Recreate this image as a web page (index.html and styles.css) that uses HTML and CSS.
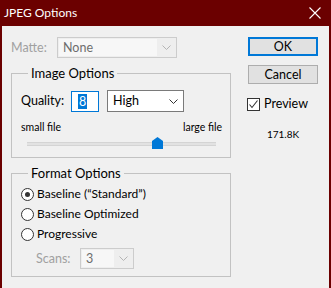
FILE: index.html
```html
<!DOCTYPE html>
<html>
<head>
<meta charset="utf-8">
<title>JPEG Options</title>
<link rel="stylesheet" href="styles.css">
</head>
<body>
<div class="window">
    <div class="titlebar">
        <span class="title">JPEG Options</span>
        <svg class="close" width="12" height="12" viewBox="0 0 12 12"><path d="M0.5 0.5L11.5 11.5M11.5 0.5L0.5 11.5" stroke="#fff" stroke-width="1.1" fill="none"/></svg>
    </div>
    <div class="content">
        <div class="left">
            <div class="row matte">
                <span class="lbl off">Matte:</span>
                <div class="select off wide">
                    <span class="field">None</span>
                    <span class="arrow"><svg width="9" height="5" viewBox="0 0 9 5"><path d="M0.5 0.5L4.5 4.5L8.5 0.5" stroke="#b4b4b4" fill="none"/></svg></span>
                </div>
            </div>

            <fieldset class="group img">
                <legend>Image Options</legend>
                <div class="row quality">
                    <span class="lbl">Quality:</span>
                    <div class="numbox"><span class="sel">8</span></div>
                    <div class="select high">
                        <span class="field">High</span>
                        <span class="arrow"><svg width="9" height="5" viewBox="0 0 9 5"><path d="M0.5 0.5L4.5 4.5L8.5 0.5" stroke="#333" fill="none"/></svg></span>
                    </div>
                </div>
                <div class="ends"><span>small file</span><span>large file</span></div>
                <div class="slider">
                    <div class="track"></div>
                    <svg class="thumb" width="11" height="12" viewBox="0 0 11 12"><path d="M0 4L5.5 0L11 4V12H0Z" fill="#0078d7"/></svg>
                </div>
            </fieldset>

            <fieldset class="group fmt">
                <legend>Format Options</legend>
                <div class="radio"><span class="dot on"></span>Baseline (“Standard”)</div>
                <div class="radio"><span class="dot"></span>Baseline Optimized</div>
                <div class="radio"><span class="dot"></span>Progressive</div>
                <div class="row scans">
                    <span class="lbl off">Scans:</span>
                    <div class="select off small">
                        <span class="field">3</span>
                        <span class="arrow"><svg width="9" height="5" viewBox="0 0 9 5"><path d="M0.5 0.5L4.5 4.5L8.5 0.5" stroke="#b4b4b4" fill="none"/></svg></span>
                    </div>
                </div>
            </fieldset>
        </div>

        <div class="right">
            <div class="btn default">OK</div>
            <div class="btn">Cancel</div>
            <div class="check">
                <span class="box"><svg width="11" height="11" viewBox="0 0 11 11"><path d="M1.5 5.5L4 8.5L9.5 1.5" stroke="#333" stroke-width="1.1" fill="none"/></svg></span>
                Preview
            </div>
            <div class="size">171.8K</div>
        </div>
    </div>
</div>
</body>
</html>
```

FILE: styles.css
```css
html,body{margin:0;padding:0;}
body{background:#f0f0f0;font:12.5px/16px "Segoe UI",Lato,"Noto Sans",Arial,sans-serif;color:#000;}
.window{width:331px;height:288px;background:#6b0000;box-sizing:border-box;padding:0 2px;overflow:hidden;}
.titlebar{height:26px;display:flex;align-items:center;justify-content:space-between;color:#fff;padding:0 10px 0 2px;margin:0 -2px 0 0;}
.title{font-size:12px;}
.close{display:block;}
.content{background:#f0f0f0;height:262px;display:flex;padding:11px 0 0 9px;box-sizing:border-box;}
.left{width:220px;}
.right{width:70px;margin-left:17px;display:flex;flex-direction:column;align-items:stretch;}

.row{display:flex;align-items:center;}
.lbl{display:block;}
.off{color:#a0a0a0;}
.matte{height:21px;}
.matte .lbl{width:46px;}

.select{display:flex;height:21px;box-sizing:border-box;border:1px solid #7a7a7a;background:#fff;}
.select .field{flex:1;padding-left:5px;line-height:19px;}
.select .arrow{width:19px;display:flex;align-items:center;justify-content:center;}
.select.off{border-color:#cccccc;background:#eeeeee;color:#6d6d6d;}
.select.off .field{background:#f7f7f7;margin:1px 0 1px 1px;line-height:17px;padding-left:4px;}
.wide{width:120px;}
.high{width:77px;height:22px;margin-left:8px;}
.high .field{line-height:20px;}
.small{width:54px;}

.group{margin:0;padding:0;border:1px solid #c2c2c2;min-width:0;}
.group legend{font-size:13px;line-height:16px;padding:0 3px;margin-left:7px;}
.img{margin-top:7px;padding:9px 0 8px 9px;height:93px;box-sizing:border-box;}
.quality{height:22px;}
.quality .lbl{width:50px;}
.numbox{width:28px;height:21px;box-sizing:border-box;border:1px solid #0078d7;background:#fff;padding:2px 0 0 6px;}
.numbox .sel{display:inline-block;background:#0078d7;color:#fff;line-height:15px;padding:0 1px;}
.ends{display:flex;justify-content:space-between;font-size:10.5px;line-height:14px;margin-top:8px;padding-right:8px;}
.slider{position:relative;height:14px;margin:2px 14px 0 6px;}
.track{position:absolute;left:0;right:0;top:6px;height:2px;background:#e2e2e2;border:1px solid #d4d4d4;border-width:1px 0;}
.thumb{position:absolute;top:1px;left:125px;}

.fmt{margin-top:7px;padding:3px 0 7px 9px;}
.radio{display:flex;align-items:center;height:20px;font-size:12px;}
.dot{width:11px;height:11px;border:1px solid #333;border-radius:50%;background:#fff;margin-right:3px;position:relative;}
.dot.on:after{content:"";position:absolute;left:3px;top:3px;width:5px;height:5px;border-radius:50%;background:#333;}
.scans{margin-top:4px;}
.scans .lbl{width:44px;padding-left:15px;}

.btn{height:19px;box-sizing:border-box;border:1px solid #adadad;background:#e1e1e1;text-align:center;line-height:17px;margin-top:9px;}
.btn.default{border:2px solid #0078d7;line-height:15px;margin-top:0;}
.check{display:flex;align-items:center;height:16px;margin:12px 0 0 -1px;}
.check .box{width:11px;height:11px;border:1px solid #333;background:#fff;margin-right:4px;display:flex;}
.size{font-size:10px;line-height:14px;text-align:center;margin-top:15px;}
```
